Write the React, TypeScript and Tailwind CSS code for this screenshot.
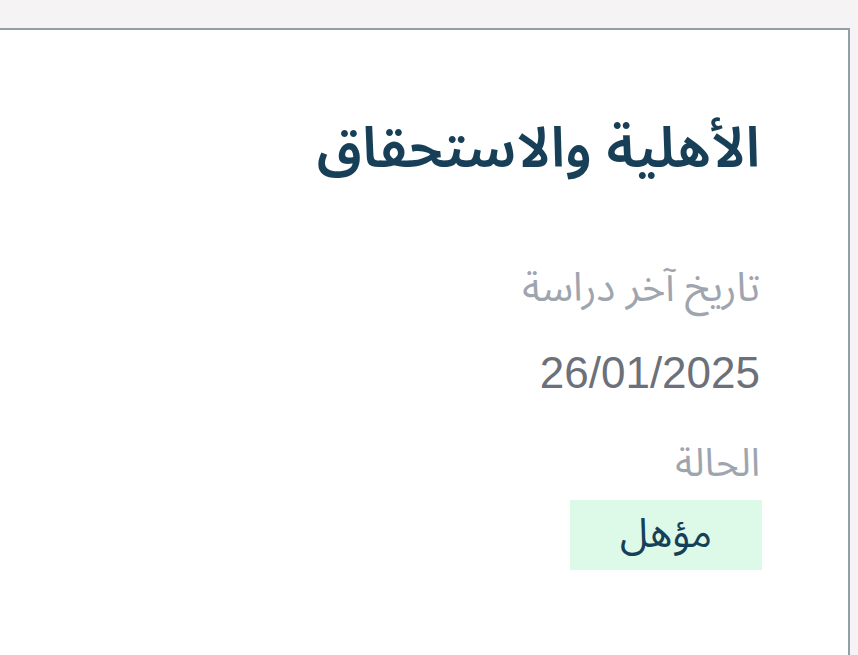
export default function App() {
  return (
    <div className="min-h-screen bg-[#f5f3f3] pt-[28px] pr-[8px]" style={{ fontFamily: '"Noto Sans Arabic", "Noto Sans", "DejaVu Sans", sans-serif' }}>
      <div dir="rtl" className="h-[640px] bg-white border-t-2 border-r-2 border-[#939eaa] pr-[88px] pt-[84px]">
        <h2 className="text-[56px] leading-[70px] font-semibold text-[#173f57]">الأهلية والاستحقاق</h2>

        <div className="mt-[80px] flex flex-col items-start">
          <div className="text-[40px] leading-[50px] text-[#9ea5af]">تاريخ آخر دراسة</div>
          <div dir="ltr" className="mt-[34px] text-[44px] leading-[50px] text-[#6b7079]" style={{ fontFamily: '"Liberation Sans", Arial, sans-serif' }}>
            26/01/2025
          </div>

          <div className="mt-[42px] text-[39px] leading-[48px] text-[#9ea5af]">الحالة</div>
          <div className="mt-[12px] -mr-[2px] w-[192px] h-[70px] flex items-center justify-center bg-[#ddf9e7] text-[40px] text-[#173f57]">
            مؤهل
          </div>
        </div>
      </div>
    </div>
  )
}
